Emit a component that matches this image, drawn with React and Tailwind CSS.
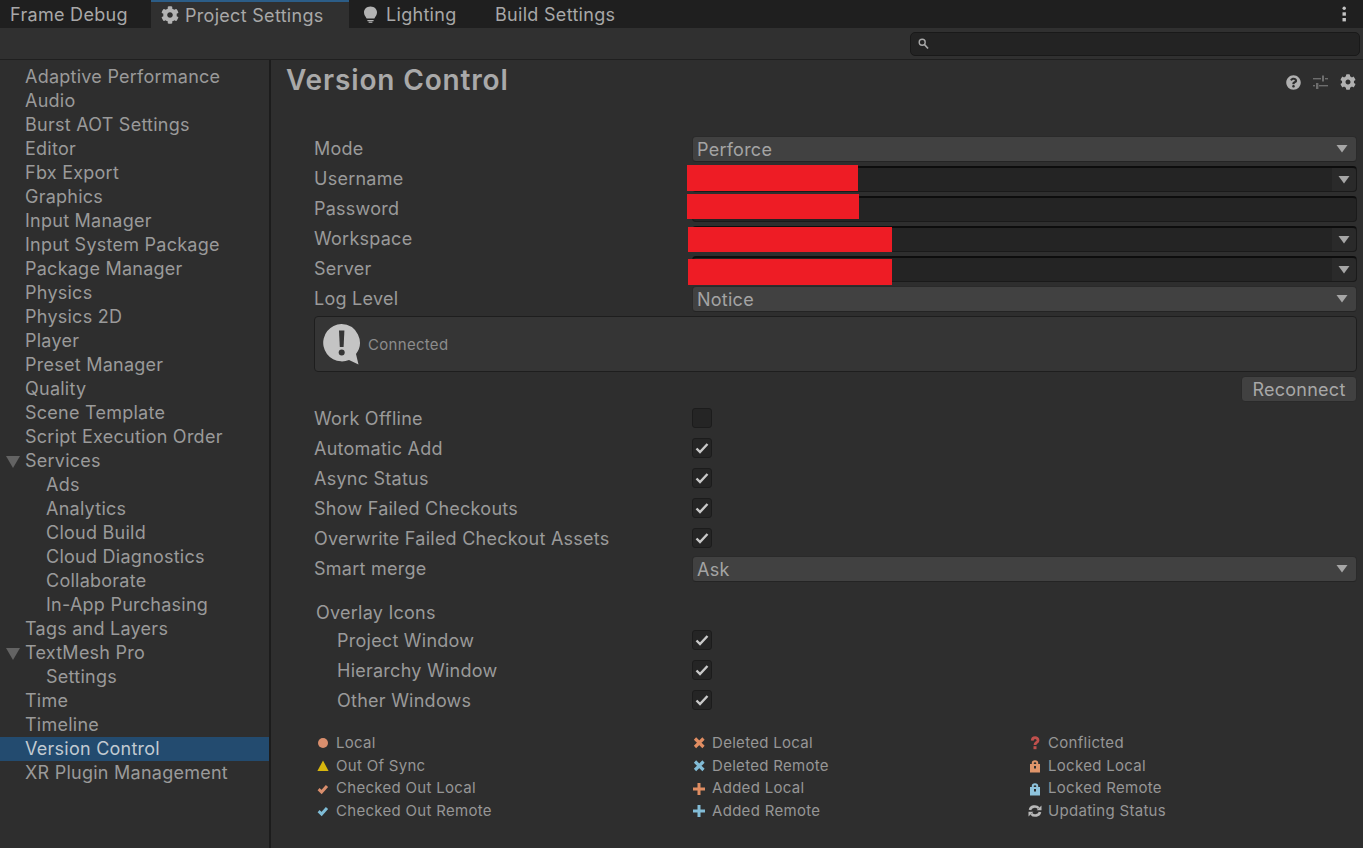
import React from "react";
import { FaCog, FaQuestionCircle } from "react-icons/fa";

const font = { fontFamily: "Inter, sans-serif" };

const Sidebar = [
  ["Adaptive Performance"], ["Audio"], ["Burst AOT Settings"], ["Editor"], ["Fbx Export"], ["Graphics"],
  ["Input Manager"], ["Input System Package"], ["Package Manager"], ["Physics"], ["Physics 2D"], ["Player"],
  ["Preset Manager"], ["Quality"], ["Scene Template"], ["Script Execution Order"], ["Services", 0, true],
  ["Ads", 1], ["Analytics", 1], ["Cloud Build", 1], ["Cloud Diagnostics", 1], ["Collaborate", 1], ["In-App Purchasing", 1],
  ["Tags and Layers"], ["TextMesh Pro", 0, true], ["Settings", 1], ["Time"], ["Timeline"], ["Version Control", 0, false, true], ["XR Plugin Management"],
];

function Caret() {
  return <svg width="12" height="8" viewBox="0 0 12 8"><path d="M0.5 0H11.5L6 7.5Z" fill="#a6a6a6" /></svg>;
}

function Label({ children, indent }) {
  return <div className={indent ? "w-[378px] pl-[23px] text-[18px] tracking-[0.25px] text-[#9a9a9a] shrink-0" : "w-[378px] text-[18px] tracking-[0.25px] text-[#9a9a9a] shrink-0"}>{children}</div>;
}

function Row({ children }) {
  return <div className="h-[30px] flex items-center">{children}</div>;
}

function Select({ label, value }) {
  return (
    <Row>
      <Label>{label}</Label>
      <div className="flex-1 h-[26px] mt-[2px] rounded-[4px] bg-[#414141] border border-[#2a2a2a] border-b-[#242424] pl-[4px] pr-[8px] flex items-center justify-between text-[18px] tracking-[0.25px] text-[#a4a4a4]">
        <span>{value}</span>
        <Caret />
      </div>
    </Row>
  );
}

function Field({ label, caret, redact }) {
  return (
    <Row>
      <Label>{label}</Label>
      <div className="relative flex-1 h-[26px] mt-[2px] rounded-[4px] bg-[#242424] border border-[#1a1a1a] border-t-2 border-t-[#0d0d0d] flex justify-end">
        {caret && <div className="w-[24px] h-full bg-[#2a2a2a] rounded-r-[4px] flex items-center justify-center"><Caret /></div>}
        <div className={redact}></div>
      </div>
    </Row>
  );
}

function Check({ label, checked, indent }) {
  return (
    <Row>
      <Label indent={indent}>{label}</Label>
      <div className="w-[20px] h-[20px] rounded-[3px] bg-[#252525] border border-[#1c1c1c] flex items-center justify-center">
        {checked && (
          <svg width="14" height="12" viewBox="0 0 14 12"><path d="M1.5 6.5 L5 10 L12.5 2" fill="none" stroke="#c9c9c9" strokeWidth="2.4" /></svg>
        )}
      </div>
    </Row>
  );
}

const lock = (c) => (
  <g>
    <path d="M4.8 6 V3.8 C4.8 1.6 9.2 1.6 9.2 3.8 V6" fill="none" stroke={c} strokeWidth="2" />
    <path fillRule="evenodd" d="M2 5 H12 V13.5 H2Z M6 7 V9.6 H8 V7Z" fill={c} />
  </g>
);

const I = {
  dot: <circle cx="7" cy="7" r="5" fill="#d98e6d" />,
  tri: <path d="M7 1.5 L12.6 12 H1.4Z" fill="#d8b70e" />,
  chkL: <path d="M2.6 7.2 L5.6 10 L11 4" fill="none" stroke="#d98e6d" strokeWidth="3" />,
  chkR: <path d="M2.6 7.2 L5.6 10 L11 4" fill="none" stroke="#7fbcd6" strokeWidth="3" />,
  xL: <path d="M3 2.5 L11.5 11 M11.5 2.5 L3 11" stroke="#e08d62" strokeWidth="3.2" />,
  xR: <path d="M3 2.5 L11.5 11 M11.5 2.5 L3 11" stroke="#82bcd6" strokeWidth="3.2" />,
  pL: <path d="M7 1 V13 M1 7 H13" stroke="#e08d62" strokeWidth="3" />,
  pR: <path d="M7 1 V13 M1 7 H13" stroke="#82bcd6" strokeWidth="3" />,
  q: <g fill="none"><path d="M4.2 4.6 C4.4 0.8 10 0.8 10 4.4 C10 6.6 7 6.4 7 9" stroke="#c0504d" strokeWidth="2.8" /><rect x="5.5" y="10.2" width="3" height="3" fill="#c0504d" /></g>,
  lockL: lock("#e0956a"),
  lockR: lock("#8ec3dc"),
  sync: <g fill="none" stroke="#b8b8b8" strokeWidth="2.6"><path d="M2 6 C2.6 2.4 8 1.2 10.6 4.2" /><path d="M12 8 C11.4 11.6 6 12.8 3.4 9.8" /><path d="M8.6 6.2 H13.5 V1.4Z" fill="#b8b8b8" stroke="none" /><path d="M5.4 7.8 H0.5 V12.6Z" fill="#b8b8b8" stroke="none" /></g>,
};

function LegendItem({ icon, text }) {
  return (
    <div className="h-[22.67px] flex items-center">
      <svg width="14" height="14" viewBox="0 0 14 14" className="shrink-0">{I[icon]}</svg>
      <span className="ml-[6px] text-[15px] tracking-[0.3px] text-[#969696]">{text}</span>
    </div>
  );
}

function LegendCol({ items, cls }) {
  return <div className={cls}>{items.map(([i, t]) => <LegendItem key={t} icon={i} text={t} />)}</div>;
}

export default function App() {
  return (
    <div style={font} className="w-[1363px] h-[848px] overflow-hidden bg-[#2e2e2e] flex flex-col">
      {/* tab strip */}
      <div className="h-[28px] bg-[#1f1f1f] flex items-stretch text-[18px] tracking-[0.3px] text-[#a8a8a8] shrink-0">
        <div className="w-[151px] pl-[10px] flex items-center">Frame Debug</div>
        <div className="w-[198px] bg-[#303030] border-t-2 border-t-[#2c5d87] pl-[10px] flex items-center gap-[6px]">
          <FaCog size={18} color="#b3b3b3" />
          <span>Project Settings</span>
        </div>
        <div className="w-[146px] pl-[14px] flex items-center gap-[8px]">
          <svg width="15" height="17" viewBox="0 0 15 17" className="shrink-0">
            <path d="M7.5 0.5 C3.4 0.5 1 3.3 1 6.4 C1 9 2.6 10.2 3.6 12.6 H11.4 C12.4 10.2 14 9 14 6.4 C14 3.3 11.6 0.5 7.5 0.5Z" fill="#b3b3b3" />
            <rect x="4.4" y="14" width="6.2" height="1.2" fill="#b3b3b3" />
            <rect x="5.6" y="15.6" width="3.8" height="1.2" fill="#b3b3b3" />
          </svg>
          <span>Lighting</span>
        </div>
        <div className="flex-1 flex items-center justify-between pr-[17px]">
          <span>Build Settings</span>
          <svg width="4" height="16" viewBox="0 0 4 16"><g fill="#c4c4c4"><rect x="0.5" y="0.5" width="3.4" height="3.4" rx="1.7" /><rect x="0.5" y="6.3" width="3.4" height="3.4" /><rect x="0.5" y="12" width="3.4" height="3.4" /></g></svg>
        </div>
      </div>

      {/* search toolbar */}
      <div className="h-[32px] bg-[#303030] border-b border-b-[#1f1f1f] flex items-center justify-end pr-[3px] shrink-0">
        <div className="w-[450px] h-[24px] rounded-[5px] bg-[#232323] border border-[#191919] flex items-center pl-[7px]">
          <svg width="11" height="12" viewBox="0 0 11 12"><circle cx="4.2" cy="4.2" r="3" fill="none" stroke="#a8a8a8" strokeWidth="1.4" /><path d="M6.5 6.6 L10 10.5" stroke="#a8a8a8" strokeWidth="1.6" /></svg>
        </div>
      </div>

      <div className="flex-1 flex min-h-0">
        {/* sidebar */}
        <div className="w-[271px] border-r-2 border-r-[#1c1c1c] pt-[5px] shrink-0">
          {Sidebar.map(([name, child, arrow, active]) => (
            <div key={name} className={active ? "h-[24px] relative flex items-center pl-[25px] pb-[2px] bg-[#234b6f] text-[#c2cad1] text-[18px] tracking-[0.25px]" : child ? "h-[24px] relative flex items-center pl-[46px] pb-[2px] text-[#9a9a9a] text-[18px] tracking-[0.25px]" : "h-[24px] relative flex items-center pl-[25px] pb-[2px] text-[#9a9a9a] text-[18px] tracking-[0.25px]"}>
              {arrow && (
                <svg width="14" height="12" viewBox="0 0 14 12" className="absolute left-[6px] top-[7px]"><path d="M0 0H14L7 12Z" fill="#636363" /></svg>
              )}
              {name}
            </div>
          ))}
        </div>

        {/* main */}
        <div className="flex-1 relative pr-[6px]">
          <div className="pl-[15px] h-[73px] flex justify-between items-start">
            <div className="text-[28px] font-semibold tracking-[0.85px] leading-[40px] text-[#a9a9a9]">Version Control</div>
            <div className="flex items-center gap-[12px] mt-[14px] mr-[1px]">
              <FaQuestionCircle size={15} color="#b0b0b0" />
              <svg width="15" height="15" viewBox="0 0 15 15" fill="#6d6d6d"><rect x="0" y="3" width="8" height="1.4" /><rect x="9" y="0.5" width="2" height="6" /><rect x="12" y="3" width="3" height="1.4" /><rect x="0" y="10" width="2" height="1.4" /><rect x="3" y="8" width="2.4" height="6" /><rect x="6" y="10" width="9" height="1.4" /></svg>
              <FaCog size={16} color="#b0b0b0" />
            </div>
          </div>

          <div className="pl-[43px]">
            <Select label="Mode" value="Perforce" />
            <Field label="Username" caret redact="absolute -left-[6px] -top-[3px] w-[171px] h-[26px] bg-[#ee1c25]" />
            <Field label="Password" redact="absolute -left-[6px] -top-[4px] w-[172px] h-[25px] bg-[#ee1c25]" />
            <Field label="Workspace" caret redact="absolute -left-[5px] -top-[1px] w-[204px] h-[25px] bg-[#ee1c25]" />
            <Field label="Server" caret redact="absolute -left-[5px] top-[1px] w-[204px] h-[26px] bg-[#ee1c25]" />
            <Select label="Log Level" value="Notice" />

            <div className="h-[56px] mt-[3px] rounded-[4px] bg-[#353535] border border-[#1e1e1e] flex items-center pl-[7px]">
              <svg width="40" height="42" viewBox="0 0 40 42" className="shrink-0">
                <path d="M19.5 1 A18.7 18.7 0 1 0 27 37 L36.5 41.5 L34 31 A18.7 18.7 0 0 0 19.5 1Z" fill="#c4c4c4" />
                <path d="M17 7.5 H22.4 L21.6 24 H17.8Z" fill="#353535" />
                <circle cx="19.7" cy="29.5" r="3" fill="#353535" />
              </svg>
              <span className="ml-[6px] pt-[2px] text-[15px] tracking-[0.3px] text-[#8c8c8c]">Connected</span>
            </div>

            <div className="h-[31px] pt-[4px] flex items-start justify-end">
              <div className="w-[116px] h-[26px] rounded-[4px] bg-[#414141] border border-[#2a2a2a] flex items-center justify-center text-[18px] tracking-[0.25px] text-[#a8a8a8]">Reconnect</div>
            </div>

            <Check label="Work Offline" />
            <Check label="Automatic Add" checked />
            <Check label="Async Status" checked />
            <Check label="Show Failed Checkouts" checked />
            <Check label="Overwrite Failed Checkout Assets" checked />
            <Select label="Smart merge" value="Ask" />

            <div className="h-[27px] mt-[15px] pl-[2px] pt-[2px] flex items-center text-[18px] tracking-[0.25px] text-[#9a9a9a]">Overlay Icons</div>
            <Check label="Project Window" checked indent />
            <Check label="Hierarchy Window" checked indent />
            <Check label="Other Windows" checked indent />

            <div className="flex mt-[17px] pl-[2px]">
              <LegendCol cls="w-[376px]" items={[["dot", "Local"], ["tri", "Out Of Sync"], ["chkL", "Checked Out Local"], ["chkR", "Checked Out Remote"]]} />
              <LegendCol cls="w-[336px]" items={[["xL", "Deleted Local"], ["xR", "Deleted Remote"], ["pL", "Added Local"], ["pR", "Added Remote"]]} />
              <LegendCol cls="flex-1" items={[["q", "Conflicted"], ["lockL", "Locked Local"], ["lockR", "Locked Remote"], ["sync", "Updating Status"]]} />
            </div>
          </div>
        </div>
      </div>
    </div>
  );
}
